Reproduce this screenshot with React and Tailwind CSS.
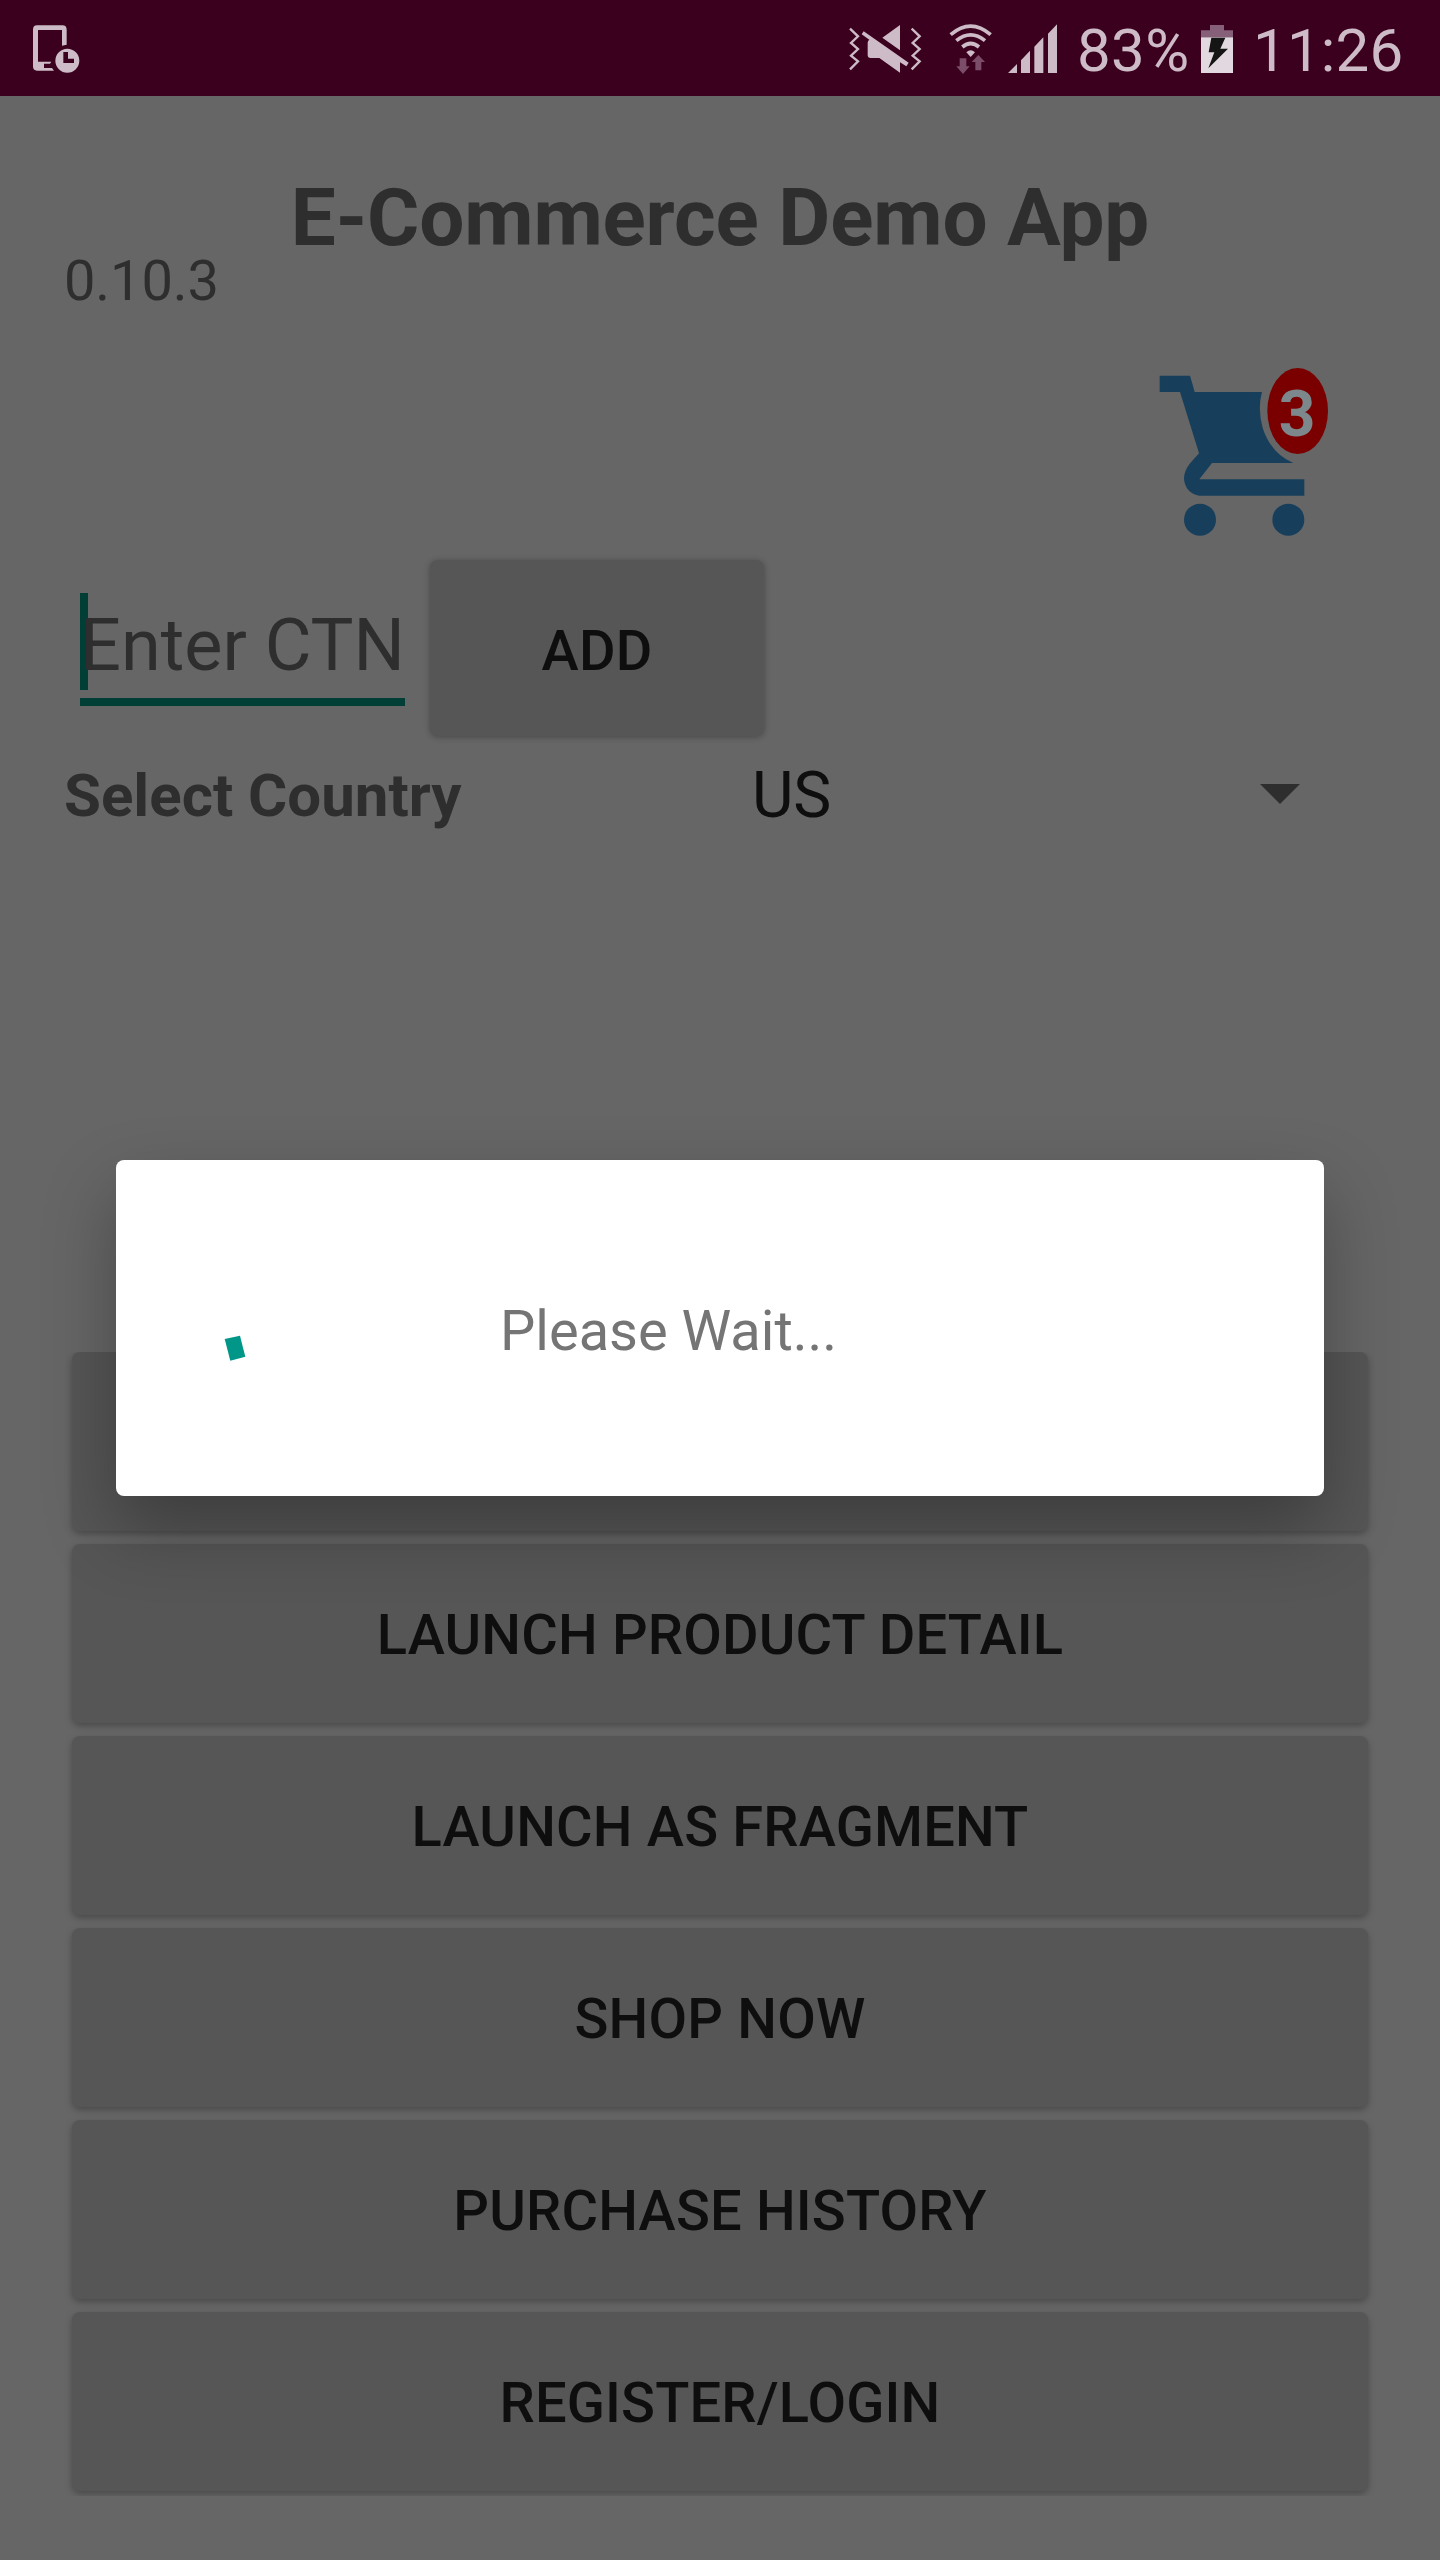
const actions = [
  "",
  "LAUNCH PRODUCT DETAIL",
  "LAUNCH AS FRAGMENT",
  "SHOP NOW",
  "PURCHASE HISTORY",
  "REGISTER/LOGIN",
];

function StatusBar() {
  return (
    <div className="flex h-24 items-center bg-[#3b001e] text-[60px] leading-[96px] text-[#cdbcc8]">
      <svg className="ml-[30px] h-24 w-[54px]" viewBox="90 0 162 288" fill="#cdbcc8">
        <path fillRule="evenodd" d="M111 76H187Q200 76 200 89V134L186 137V90H114V185H154L150 191H132V204H156L162 212H111Q99 212 99 199V89Q99 76 111 76Z" />
        <path fillRule="evenodd" d="M202 146A36 36 0 1 0 202 218A36 36 0 1 0 202 146ZM190 156H204V176H222V189H190Z" />
      </svg>
      <svg className="ml-[762px] h-24 w-[80px]" viewBox="48 0 240 288" fill="#cdbcc8">
        <g fill="none" stroke="#cdbcc8" strokeWidth="7">
          <path d="M60 86L84 109L63 129L84 147L63 167L84 184L60 208" />
          <path d="M245 86L269 109L248 129L269 147L248 167L269 184L245 208" />
        </g>
        <path d="M210 75V151L157 113Z" />
        <path d="M101 94L236 188L229 199L210 187V218L148 174H122Q113 174 113 165V128Q113 122 118 119L95 103Z" />
      </svg>
      <svg className="ml-[20px] h-24 w-[48px]" viewBox="348 0 144 288" fill="none" stroke="#cdbcc8">
        <g strokeWidth="11">
          <path d="M362 104Q422 53 482 104" />
          <path d="M379 122Q422 87 465 122" />
          <path d="M397 141Q422 120 447 141" />
        </g>
        <path d="M409 157Q422 144 435 157L422 171Z" fill="#cdbcc8" stroke="none" />
        <path d="M389 175H409V199H419L399 222L379 199H389ZM436 211H454V186H465L445 165L425 186H436Z" fill="#7b4d68" stroke="none" />
      </svg>
      <svg className="ml-[10px] h-24 w-[54px]" viewBox="522 0 162 288" fill="#cdbcc8">
        <path d="M534 219L561 192V219ZM573 219V181L600 152V219ZM613 219V140L640 112V219ZM654 219V101L681 73V219Z" />
      </svg>
      <span className="relative top-[3px] ml-[19px] w-[113px] tracking-[0.4px] whitespace-nowrap">83%</span>
      <svg className="ml-[8px] h-24 w-[40px]" viewBox="414 0 120 288">
        <path d="M450 75H492V91H519V112H423V91H450Z" fill="#865f78" />
        <path d="M423 112H519V219H423Z" fill="#e2d8df" />
        <path d="M454 113H496L481 146H504L445 205L463 157H446Z" fill="#151515" />
      </svg>
      <span className="relative top-[3px] ml-[15px] tracking-[0.2px] whitespace-nowrap">11:26</span>
    </div>
  );
}

function CartIcon() {
  return (
    <svg className="h-[220px] w-[240px]" viewBox="0 0 720 660">
      <g fill="#173f5c">
        <path d="M119 107H210Q217 130 224 156H426Q412 205 428 264Q454 342 520 369H276L238 418H553V467H238C205 462 192 436 192 414C194 382 218 362 237 340L180 156H119Z" />
        <circle cx="240" cy="539" r="48" />
        <circle cx="505" cy="539" r="48" />
      </g>
      <ellipse cx="533" cy="213" rx="91" ry="129" fill="#7a0000" />
      <text x="531" y="288" textAnchor="middle" fontSize="192" fontWeight="700" fill="#7d888d">3</text>
    </svg>
  );
}

function RaisedButton({ label, className }) {
  return (
    <button className={"flex shrink-0 items-center justify-center rounded-lg bg-[#565656] text-[56px] leading-[66px] font-medium tracking-[0.18px] text-[#0e0e0e] " + className}>
      {label}
    </button>
  );
}

function LoadingDialog() {
  return (
    <div className="absolute inset-x-[116px] top-[1160px] flex h-[336px] items-center rounded-lg bg-white shadow-[0_32px_72px_rgba(0,0,0,0.3)]">
      <svg className="ml-[64px] h-[192px] w-[192px]" viewBox="180 1232 192 192">
        <path d="M224.7 1339L240 1335.7L245.3 1356.7L230.3 1360.7Z" fill="#009688" />
      </svg>
      <span className="ml-[128px] pt-1.5 text-[56px] leading-[66px] text-[#757575]">Please Wait...</span>
    </div>
  );
}

export default function App() {
  return (
    <div className="relative flex h-[2560px] w-[1440px] flex-col overflow-hidden bg-[#666666] font-[Roboto,sans-serif] text-[#2e2e2e]">
      <StatusBar />
      <h1 className="mt-[82px] text-center text-[80px] leading-[80px] font-bold tracking-[-0.15px]">E-Commerce Demo App</h1>
      <p className="ml-16 pt-px text-[56px] leading-[44px] tracking-[-0.1px]">0.10.3</p>
      <div className="mt-[37px] mr-20 flex justify-end">
        <CartIcon />
      </div>
      <div className="flex h-[176px] items-start pl-20">
        <div className="mt-[33px] h-[113px] w-[325px] border-b-8 border-[#003e36] whitespace-nowrap">
          <div className="h-[97px] border-l-8 border-[#003e36] text-[72px] leading-[105px]">
            <span className="-ml-2">Enter CTN</span>
          </div>
        </div>
        <RaisedButton label="ADD" className="ml-[25px] h-[176px] w-[334px] pt-1.5 shadow-[0_1px_6px_rgba(0,0,0,0.3)]" />
      </div>
      <div className="mt-[20px] flex h-20 items-center pl-16">
        <span className="w-[688px] text-[60px] leading-[80px] font-bold">Select Country</span>
        <span className="w-[508px] text-[64px] leading-[78px] tracking-[-0.3px] text-[#0e0e0e]">US</span>
        <svg className="mb-1 h-5 w-10" viewBox="0 0 40 20" fill="#2e2e2e">
          <path d="M0 0H40L20 20Z" />
        </svg>
      </div>
      <div className="mt-[516px] flex h-[1144px] flex-col gap-[13px] overflow-hidden px-[72px]">
        {actions.map((label, i) => (
          <RaisedButton key={i} label={label} className="h-[179px] w-full pt-[3px] shadow-[0_3px_7px_rgba(0,0,0,0.28)]" />
        ))}
      </div>
      <LoadingDialog />
    </div>
  );
}
